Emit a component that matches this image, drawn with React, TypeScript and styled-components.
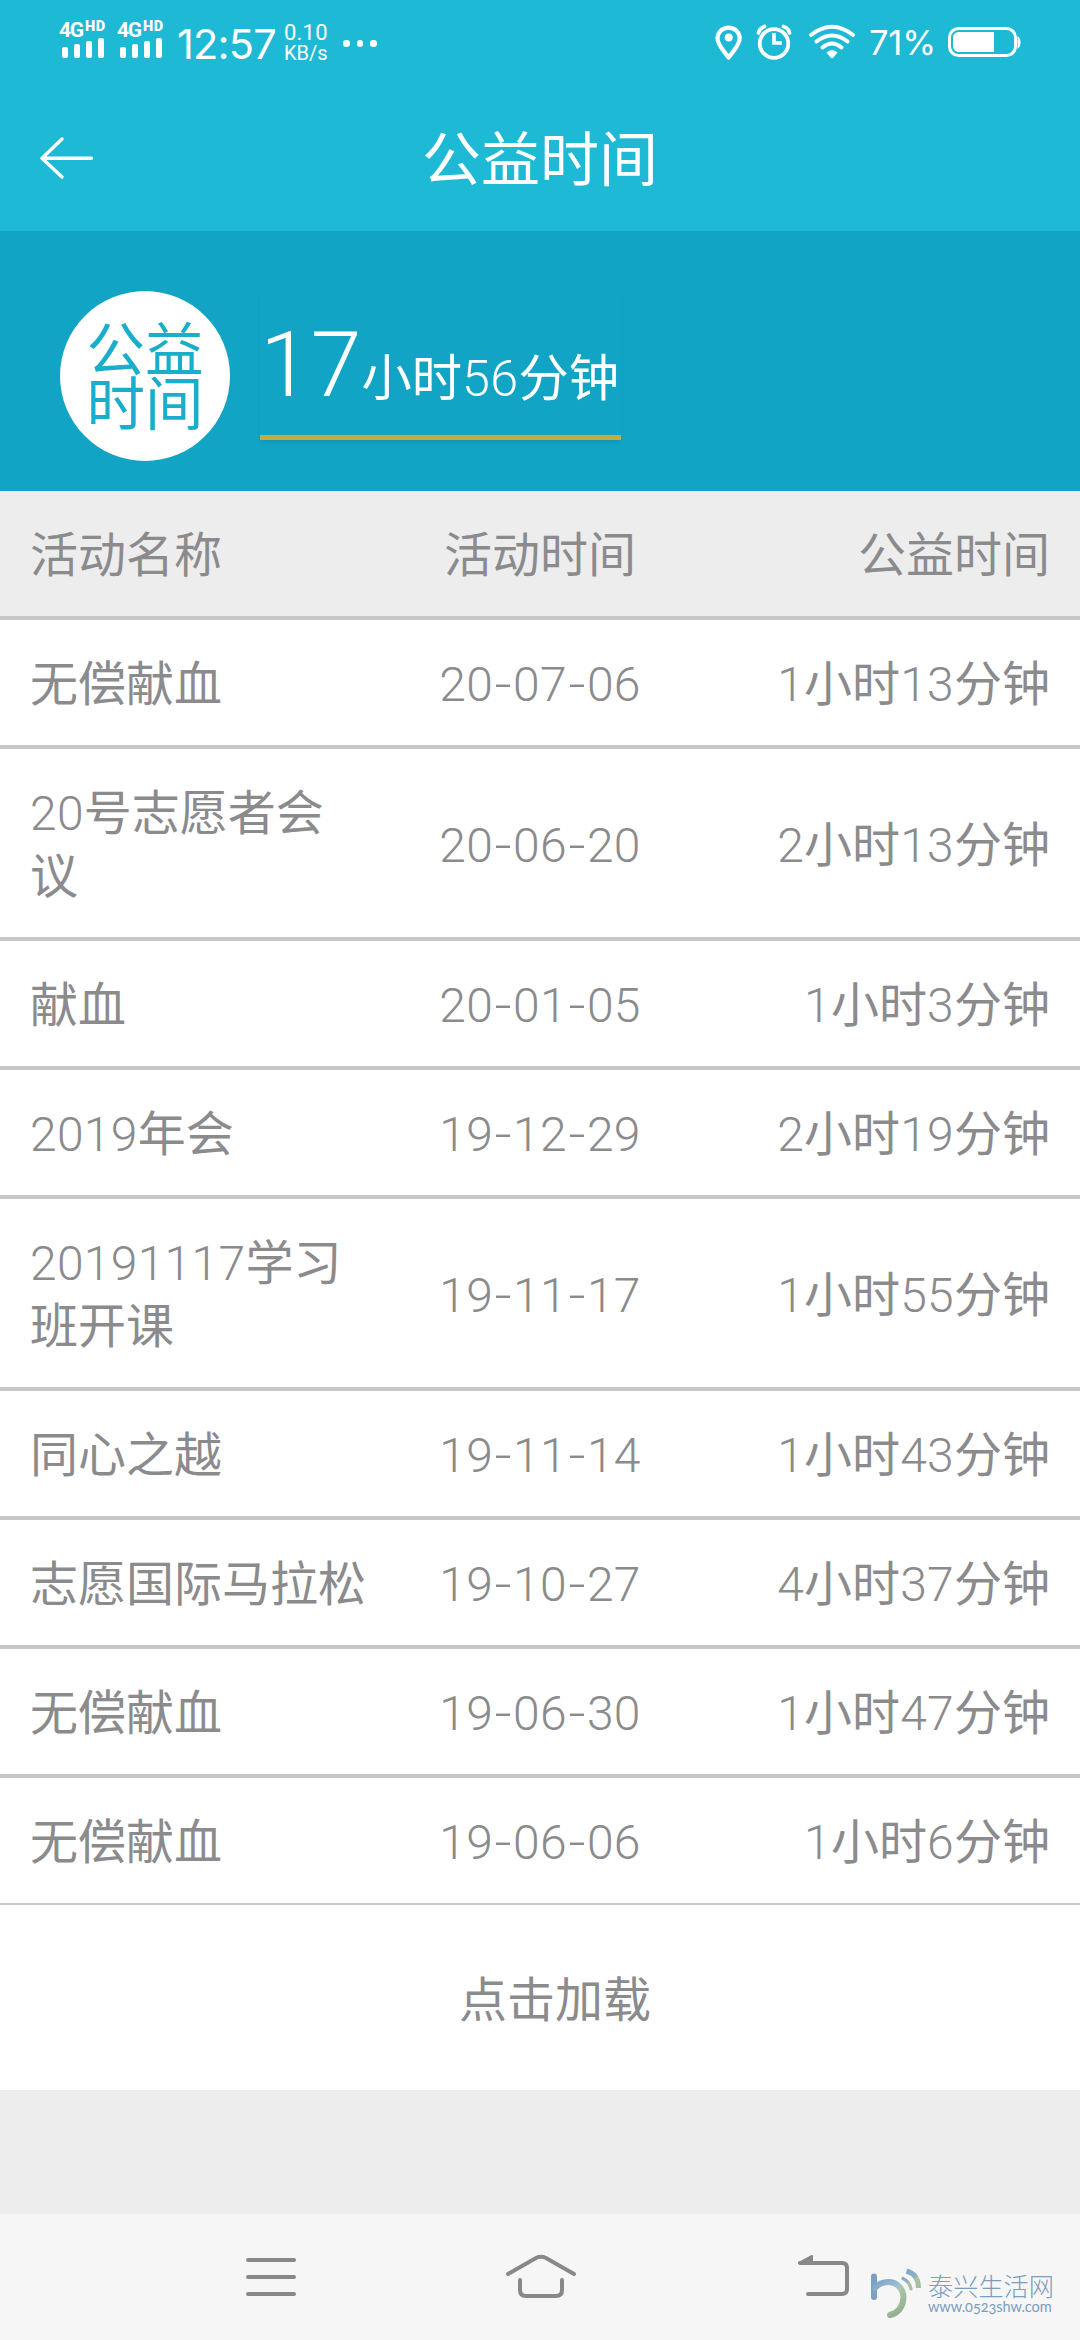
import React from "react";
import styled, { createGlobalStyle } from "styled-components";

const Global = createGlobalStyle`
  * { box-sizing: border-box; }
  body { margin: 0; background: #ededed; }
`;

const Screen = styled.div`
  width: 1080px;
  height: 2340px;
  display: flex;
  flex-direction: column;
  background: #ededed;
  font-family: Roboto, "Noto Sans CJK SC", sans-serif;
  font-weight: 300;
  overflow: hidden;
`;

const Cjk = styled.span`
  font-family: "Noto Sans CJK SC", sans-serif;
  font-weight: 400;
  line-height: 1;
`;

const Digits = styled.span`
  letter-spacing: 0.3px;
`;

const StatusBar = styled.div`
  height: 84px;
  flex: none;
  display: flex;
  justify-content: space-between;
  background: #1eb9d4;
  color: #fff;
  padding: 0 58px 0 59px;
`;

const StatusGroup = styled.div`
  display: flex;
  align-items: flex-start;
`;

const Sim = styled.div`
  width: 58px;
  padding-top: 20px;
  display: flex;
  flex-direction: column;
`;

const SimLabel = styled.div`
  display: flex;
  font: 700 21px/20px Roboto, sans-serif;
  height: 18px;
  letter-spacing: -1.2px;
`;

const SimHd = styled.span`
  font-size: 14.5px;
  font-weight: 900;
  line-height: 14px;
  letter-spacing: 0.6px;
  padding: 0 0 0 2px;
`;

const Bars = styled.div`
  display: flex;
  align-items: flex-end;
  gap: 6px;
  height: 20px;
  padding-left: 3px;
`;

const Bar = styled.div<{ $h: number }>`
  width: 6px;
  height: ${(p) => p.$h}px;
  border-radius: 2px;
  background: #fff;
`;

const Clock = styled.div`
  font: 400 41.5px/48px Inter, sans-serif;
  letter-spacing: -0.8px;
  padding: 20px 0 0 2px;
  width: 109px;
`;

const Speed = styled.div`
  font: 400 20px/20px Roboto, sans-serif;
  padding-top: 23px;
  width: 59px;
`;

const SpeedValue = styled.div`
  font-size: 22px;
  letter-spacing: 0.2px;
`;

const Dots = styled.div`
  display: flex;
  gap: 7px;
  padding-top: 40px;
`;

const Dot = styled.i`
  width: 6.6px;
  height: 6.6px;
  border-radius: 50%;
  background: #fff;
`;

const Percent = styled.div`
  font: 400 34.5px/40px Inter, sans-serif;
  letter-spacing: -0.2px;
  padding: 23px 0 0 13px;
  width: 92px;
`;

const TitleBar = styled.header`
  height: 147px;
  flex: none;
  display: grid;
  grid-template-columns: 120px 1fr 120px;
  background: #1eb9d4;
  color: #fff;
`;

const BackButton = styled.button`
  border: 0;
  padding: 49px 0 0 38px;
  background: none;
  display: flex;
  align-items: flex-start;
`;

const Title = styled.h1`
  margin: 0;
  text-align: center;
  font: 400 59px/144px "Noto Sans CJK SC", sans-serif;
`;

const Summary = styled.section`
  height: 260px;
  flex: none;
  display: flex;
  padding: 60px 60px 0;
  gap: 30px;
  background: #12a4c5;
`;

const Badge = styled.div`
  width: 170px;
  height: 170px;
  border-radius: 50%;
  background: #fff;
  color: #1aaecb;
  font: 400 58.5px/54px "Noto Sans CJK SC", sans-serif;
  display: flex;
  flex-direction: column;
  align-items: center;
  padding-top: 28px;
`;

const Total = styled.div`
  width: 361px;
  height: 149px;
  border-bottom: 5px solid #c2ad45;
  color: #fff;
  font-size: 50.3px;
  line-height: 110px;
  padding-top: 19px;
  white-space: nowrap;
  box-shadow: 0 4px 4px -2px rgba(20, 110, 150, 0.35);
`;

const TotalHours = styled.span`
  font-size: 91.5px;
`;

const Table = styled.section`
  flex: none;
  background: #fff;
  color: #8b8b8d;
  font-size: 48px;
  line-height: 63px;
`;

const Row = styled.div<{ $head?: boolean; $last?: boolean }>`
  display: grid;
  grid-template-columns: repeat(3, 340px);
  align-items: center;
  padding: 33px 30px 29px;
  border-bottom: ${(p) => (p.$last ? 2 : 4)}px solid #c7c7c7;
  background: ${(p) => (p.$head ? "#ededed" : "#fff")};
`;

const Cell = styled.div<{ $align?: string }>`
  text-align: ${(p) => p.$align || "left"};
  white-space: ${(p) => (p.$align ? "nowrap" : "normal")};
`;

const Dash = styled.span`
  display: inline-block;
  width: 20px;
  text-align: center;
  transform: scaleX(1.25);
`;

const LoadMore = styled.button`
  display: block;
  width: 100%;
  height: 185px;
  border: 0;
  padding: 0 0 4px 30px;
  background: #fff;
  color: #8b8b8d;
  font: 400 48px/64px "Noto Sans CJK SC", sans-serif;
`;

const NavBar = styled.nav`
  margin-top: auto;
  height: 126px;
  flex: none;
  display: grid;
  grid-template-columns: 206px 130px 410px 156px;
  background: #f6f6f6;
  position: relative;
`;

const NavButton = styled.button`
  border: 0;
  padding: 36px 0 0;
  background: none;
  display: flex;
  align-items: flex-start;
  justify-content: center;
`;

const Watermark = styled.div`
  position: absolute;
  left: 868px;
  top: 50px;
  display: flex;
  gap: 6px;
  color: #7b9dbe;
`;

const SiteName = styled.div`
  font: 300 25.2px/26px "Noto Sans CJK SC", sans-serif;
  padding-top: 8px;
`;

const SiteUrl = styled.div`
  font: 400 14.6px/18px Lato, sans-serif;
  font-variant-numeric: oldstyle-nums;
  letter-spacing: -0.1px;
`;

const SimSignal = () => (
  <Sim>
    <SimLabel>
      4G<SimHd>HD</SimHd>
    </SimLabel>
    <Bars>
      {[11, 14, 17, 20].map((h) => (
        <Bar key={h} $h={h} />
      ))}
    </Bars>
  </Sim>
);

const StatusIcons = () => (
  <svg width="142" height="84" viewBox="714 0 142 84" fill="none" stroke="#fff">
    <path d="M728.6 57.5C724 51 717.5 45 717.5 38.2a11.1 10.6 0 0 1 22.2 0C739.7 45 733.2 51 728.6 57.5Z" strokeWidth="4.2" strokeLinejoin="round" />
    <circle cx="728.7" cy="37.5" r="4" fill="#fff" stroke="none" />
    <circle cx="774" cy="43.5" r="14.3" strokeWidth="3.8" />
    <path d="M774 33v10h8" strokeWidth="3.6" />
    <path d="M758.5 33q1-5 6-6.5M789.5 33q-1-5-6-6.5" strokeWidth="3.8" strokeLinecap="round" />
    <g strokeWidth="4" strokeLinecap="round">
      <path d="M811 35Q832 18.500 853 35" />
      <path d="M816.5 41.5Q832 29.500 847.5 41.5" />
      <path d="M822.5 47.5Q832 39.500 841.5 47.5" />
    </g>
    <path d="M826.500 52.5q5.500-5 11 0l-4 5q-1.500 1.300-3 0z" fill="#fff" stroke="none" />
  </svg>
);

const Battery = () => (
  <svg width="74" height="84" viewBox="948 0 74 84" fill="none">
    <rect x="949.5" y="28.5" width="66" height="27" rx="9" stroke="#fff" strokeWidth="3" />
    <path d="M958 32h36v20h-36q-5-1-5-6v-8q0-5 5-6z" fill="#fff" />
    <path d="M1017.500 36q3 2 3 6.500t-3 6.500z" fill="#fff" />
  </svg>
);

const rows = [
  ["无偿献血", "20-07-06", "1小时13分钟"],
  ["20号志愿者会议", "20-06-20", "2小时13分钟"],
  ["献血", "20-01-05", "1小时3分钟"],
  ["2019年会", "19-12-29", "2小时19分钟"],
  ["20191117学习班开课", "19-11-17", "1小时55分钟"],
  ["同心之越", "19-11-14", "1小时43分钟"],
  ["志愿国际马拉松", "19-10-27", "4小时37分钟"],
  ["无偿献血", "19-06-30", "1小时47分钟"],
  ["无偿献血", "19-06-06", "1小时6分钟"],
];

const Mixed = ({ text }: { text: string }) => (
  <>
    {text.split(/(\d+)/).map((part, i) =>
      part === "" ? null : /\d/.test(part) ? <Digits key={i}>{part}</Digits> : <Cjk key={i}>{part}</Cjk>
    )}
  </>
);

const DateText = ({ value }: { value: string }) => (
  <>
    {value.split(/(-)/).map((part, i) => (part === "-" ? <Dash key={i}>-</Dash> : <Digits key={i}>{part}</Digits>))}
  </>
);

export default function App() {
  return (
    <Screen>
      <Global />
      <StatusBar>
        <StatusGroup>
          <SimSignal />
          <SimSignal />
          <Clock>12:57</Clock>
          <Speed>
            <SpeedValue>0.10</SpeedValue>
            KB/s
          </Speed>
          <Dots>
            <Dot />
            <Dot />
            <Dot />
          </Dots>
        </StatusGroup>
        <StatusGroup>
          <StatusIcons />
          <Percent>71%</Percent>
          <Battery />
        </StatusGroup>
      </StatusBar>

      <TitleBar>
        <BackButton aria-label="返回">
          <svg width="58" height="50" viewBox="0 0 58 50" fill="none" stroke="#fff" strokeWidth="3.4" strokeLinecap="round" strokeLinejoin="round">
            <path d="M24 6 4 25.300 24 44M4 25.300H53.500" />
          </svg>
        </BackButton>
        <Title>公益时间</Title>
      </TitleBar>

      <Summary>
        <Badge>
          <span>公益</span>
          <span>时间</span>
        </Badge>
        <Total>
          <TotalHours>17</TotalHours>
          <Mixed text="小时56分钟" />
        </Total>
      </Summary>

      <Table>
        <Row $head>
          <Cell><Cjk>活动名称</Cjk></Cell>
          <Cell $align="center"><Cjk>活动时间</Cjk></Cell>
          <Cell $align="right"><Cjk>公益时间</Cjk></Cell>
        </Row>
        {rows.map(([name, date, time], i) => (
          <Row key={i} $last={i === rows.length - 1}>
            <Cell><Mixed text={name} /></Cell>
            <Cell $align="center"><DateText value={date} /></Cell>
            <Cell $align="right"><Mixed text={time} /></Cell>
          </Row>
        ))}
        <LoadMore>点击加载</LoadMore>
      </Table>

      <NavBar>
        <span />
        <NavButton aria-label="菜单">
          <svg width="54" height="52" viewBox="244 2250 54 52" stroke="#888" strokeWidth="4" strokeLinecap="round">
            <path d="M248 2260H294M248 2277H294M248 2294H294" />
          </svg>
        </NavButton>
        <NavButton aria-label="主页">
          <svg width="72" height="52" viewBox="505 2250 72 52" fill="none" stroke="#888" strokeWidth="4" strokeLinecap="round" strokeLinejoin="round">
            <path d="M508 2274 536 2258q5-2.500 10 0L574 2274" />
            <path d="M520 2280V2290q0 6 6 6H556q6 0 6-6V2280" />
          </svg>
        </NavButton>
        <NavButton aria-label="返回">
          <svg width="56" height="52" viewBox="796 2250 56 52" fill="none" stroke="#888" strokeWidth="4" strokeLinecap="round">
            <path d="M800 2263H842q5 0 5 5V2289q0 5-5 5H808" />
            <path d="M799 2263 812 2256V2264Z" fill="#888" strokeWidth="2" strokeLinejoin="round" />
          </svg>
        </NavButton>
        <Watermark>
          <svg width="54" height="56" viewBox="868 2264 54 56" fill="none" strokeLinecap="round">
            <defs>
              <linearGradient id="swirl" x1="874" y1="2280" x2="900" y2="2316" gradientUnits="userSpaceOnUse">
                <stop offset="0" stopColor="#7ba0c4" />
                <stop offset="0.42" stopColor="#9dc0d4" />
                <stop offset="0.5" stopColor="#aac8a8" />
                <stop offset="1" stopColor="#92ab8e" />
              </linearGradient>
              <linearGradient id="wave" x1="905" y1="2269" x2="917" y2="2290" gradientUnits="userSpaceOnUse">
                <stop offset="0" stopColor="#82a6c6" />
                <stop offset="0.5" stopColor="#8fb0c6" />
                <stop offset="0.55" stopColor="#a9c4a4" />
                <stop offset="1" stopColor="#a3bd9c" />
              </linearGradient>
            </defs>
            <path d="M874 2276.500V2297" stroke="#7ba0c4" strokeWidth="6" />
            <path d="M875 2288Q880 2282 888.500 2282A15 15.500 0 0 1 903.500 2297.500Q902.500 2312 890 2315" stroke="url(#swirl)" strokeWidth="6" />
            <path d="M903 2278.500Q909.500 2281.500 911 2289" stroke="url(#wave)" strokeWidth="3.2" />
            <path d="M906.500 2271Q918.500 2274.500 918.500 2288" stroke="url(#wave)" strokeWidth="5" strokeLinecap="butt" />
          </svg>
          <div>
            <SiteName>泰兴生活网</SiteName>
            <SiteUrl>www.0523shw.com</SiteUrl>
          </div>
        </Watermark>
      </NavBar>
    </Screen>
  );
}
